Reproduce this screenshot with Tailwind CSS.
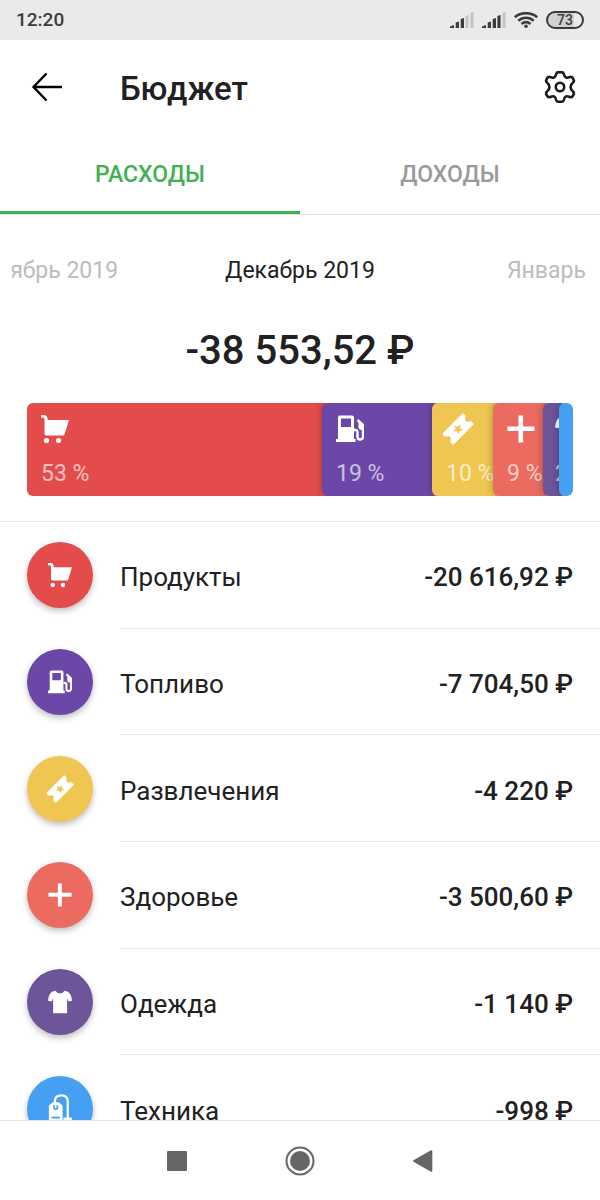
<!DOCTYPE html>
<html lang="ru">
<head>
  <meta charset="UTF-8" />
  <meta name="viewport" content="width=device-width, initial-scale=1.0" />
  <title>Бюджет</title>
  <script src="https://cdn.jsdelivr.net/npm/@tailwindcss/browser@4"></script>
</head>
<body class="h-screen flex flex-col overflow-hidden bg-white text-[#212121] font-['Roboto','Noto_Sans',sans-serif]">

  <!-- Category icons -->
  <svg class="hidden" aria-hidden="true">
    <symbol id="cart" viewBox="0 0 28 28">
      <path d="M0 0h3.500Q6.500.3 6.700 5H28l-4.300 14q-.4 1.500-2 1.500H5.500q-2 0-2-2V4q0-1-1-1.200L0 2.500Z" />
      <circle cx="5.500" cy="25.500" r="2.600" />
      <circle cx="17.500" cy="25.500" r="2.600" />
    </symbol>
    <symbol id="fuel" viewBox="0 0 28 28">
      <path fill-rule="evenodd" d="M4 .5h12q2 0 2 2V24h1.500v3H0v-3h2V2.500q0-2 2-2ZM5 3.500v8.500h10V3.500Z" />
      <path d="M18 15h1.500q2 0 2 2.500v4q0 3 2.500 3t3-2.500V11q0-1-.6-1.600L21.500 5" fill="none" stroke="currentColor" stroke-width="2.400" />
      <path d="M22.500 6.500 28 11v4h-2.500q-3-.5-3-3Z" />
    </symbol>
    <symbol id="ticket" viewBox="-2 -2 32 32">
      <path transform="rotate(-45 14 14)" fill-rule="evenodd" d="M0 6.200h28q.7 0 .7.700v3.600l-1.300.2-.5 1.200-1.500.3v3.600l1.500.3.500 1.200 1.300.2v3.600q0 .7-.7.700H0q-.7 0-.7-.7v-3.600l1.300-.2.500-1.200 1.500-.3v-3.600l-1.500-.3-.5-1.200-1.300-.2V6.900q0-.7.700-.7ZM14 8.600l-1.300 3.700-3.900.1 3.100 2.400-1.100 3.700 3.200-2.200 3.200 2.200-1.100-3.700 3.100-2.400-3.900-.1Z" />
    </symbol>
    <symbol id="plus" viewBox="0 0 28 28">
      <path d="M11.500.5h4.600v11h11.400v4.600H16.100v11.400h-4.600V16.100H.5v-4.600h11Z" />
    </symbol>
    <symbol id="shirt" viewBox="0 0 28 28">
      <path d="M8.500 1Q10.500 4 14 4t5.500-3Q24 1.500 25.700 4.500q2 3.500 2.300 8l-4 .8-1.700-3.500V27H6V9.800l-1.700 3.500-4.300-.8q.3-4.500 2.300-8Q4 1.500 8.500 1Z" />
    </symbol>
    <symbol id="tag" viewBox="0 0 28 36">
      <path fill-rule="evenodd" d="M5.500 10h7L17 14v20H1V14ZM6 13.500v2.500q0 3.200 3 3.200t3-3.200v-2.500h-2V16q0 1.200-1 1.200T8 16v-2.500ZM4 27v2h10v-2Z" />
      <path d="M8 13V9q0-7 7.500-7T23 9v21" fill="none" stroke="currentColor" stroke-width="2.600" />
      <path d="M18 28h10v4H18Z" />
    </symbol>
  </svg>

  <!-- Status bar -->
  <div class="flex h-10 shrink-0 items-center justify-between bg-[#eaeaea] px-4 text-[#3c3c3c]">
    <span class="text-[19px] font-medium">12:20</span>
    <div class="flex items-center gap-2">
      <svg class="h-4 w-6" viewBox="0 0 24 16" fill="currentColor">
        <path d="M0 16v-1.500L4 13v3Zm5.700 0v-5.500l3.300-1V16Zm5 0V7L14 6v10Z" />
        <path d="M15.500 16V4l3-1v13Zm5 0V1l3-1v16Z" fill="#c4c4c4" />
      </svg>
      <svg class="h-4 w-6" viewBox="0 0 24 16" fill="currentColor">
        <path d="M0 16v-1.500L4 13v3Zm5.700 0v-5.500l3.300-1V16Zm5 0V7L14 6v10Zm4.700 0V4l3.200-1v13Z" />
        <path d="M20.500 16V1l3-1v16Z" fill="#c4c4c4" />
      </svg>
      <svg class="h-4 w-6" viewBox="0 0 24 16" fill="none" stroke="currentColor" stroke-width="2.600">
        <path d="M.8 5.200Q5.500 1.200 12 1.200t11.200 4M4.300 8.800Q7.500 5.800 12 5.800t7.700 3M7.500 12q4.500-3.600 9 0" />
        <circle cx="12" cy="14.200" r="1.800" fill="currentColor" stroke="none" />
      </svg>
      <span class="flex h-[18px] w-[38px] items-center justify-center rounded-full border-2 border-current bg-linear-to-r from-[#d0d0d0] from-75% to-[#eaeaea] to-75% text-[14px] leading-none font-medium">73</span>
    </div>
  </div>

  <!-- App bar -->
  <header class="flex h-[94px] shrink-0 items-center px-6">
    <button type="button" aria-label="Назад" class="w-24 pl-[7px]">
      <svg class="h-8 w-8" viewBox="0 0 32 32" fill="none" stroke="#000" stroke-width="2.400">
        <path d="M31 16H2.500M15.500 2.500 2.500 16l13 13.500" />
      </svg>
    </button>
    <h1 class="grow pt-1 text-[33px] font-medium">Бюджет</h1>
    <button type="button" aria-label="Настройки">
      <svg class="h-8 w-8" viewBox="0 0 32 32" fill="none" stroke="#1a1a1a" stroke-width="2.600" stroke-linejoin="round">
        <path d="M14.500 1.200h3q1.800 0 2.300 1.800.7 3 2.200 3.600 1.500.5 3.300-.4 2.200-1 3.300.6l1 1.900q.9 1.600-.8 3-2.200 1.600-2.200 4.300t2.200 4.300q1.700 1.400.8 3l-1 1.900q-1.100 1.600-3.300.6-1.800-.9-3.300-.4-1.500.6-2.200 3.600-.5 1.800-2.300 1.800h-3q-1.800 0-2.300-1.800-.7-3-2.200-3.600-1.500-.5-3.300.4-2.200 1-3.300-.6l-1-1.900q-.9-1.600.8-3 2.200-1.600 2.200-4.300t-2.200-4.300q-1.700-1.400-.8-3l1-1.900q1.100-1.600 3.300-.6 1.800.9 3.300.4 1.500-.6 2.200-3.600.5-1.800 2.300-1.800Z" />
        <circle cx="16" cy="16" r="4.200" />
      </svg>
    </button>
  </header>

  <!-- Tabs -->
  <nav class="grid h-[81px] shrink-0 grid-cols-2 border-b border-[#e2e2e2] text-[23px] font-medium">
    <a href="#expenses" class="flex items-center justify-center border-b-3 border-[#43b153] pt-1.5 text-[#43b153]">РАСХОДЫ</a>
    <a href="#income" class="flex items-center justify-center border-b-3 border-transparent pt-1.5 text-[#9a9a9a]">ДОХОДЫ</a>
  </nav>

  <!-- Month switcher and total -->
  <section class="shrink-0 border-b border-[#e6e6e6] pb-[25px]">
    <div class="mx-3 grid grid-cols-[1fr_auto_1fr] pt-10 text-[23px] leading-8 whitespace-nowrap">
      <button type="button" class="flex justify-end overflow-hidden pr-[107px] text-[#bcbcbc]"><span>Ноябрь 2019</span></button>
      <span>Декабрь 2019</span>
      <button type="button" class="flex overflow-hidden pl-[132px] text-[#bcbcbc]"><span class="overflow-hidden">Январь 2019</span></button>
    </div>
    <p class="pt-10 text-center text-[40px] leading-12 font-medium">-38 553,52 ₽</p>

    <!-- Share of each category -->
    <div class="mx-[27px] mt-7 grid h-[93px] grid-cols-[295fr_110fr_61fr_50fr_16fr_14fr] overflow-hidden rounded-md text-[23px] whitespace-nowrap text-white">
      <div class="-mr-2 flex min-w-0 flex-col justify-between overflow-hidden bg-[#e44c4b] pt-3 pb-2 pl-3.5">
        <svg class="h-7 w-7 shrink-0 fill-current"><use href="#cart" /></svg>
        <span class="leading-7 text-white/65">53 %</span>
      </div>
      <div class="-mr-2 flex min-w-0 flex-col justify-between overflow-hidden rounded-md bg-[#6b48a8] pt-3 pb-2 pl-3.5 shadow-[0_0_8px_rgba(0,0,0,0.3)]">
        <svg class="h-7 w-7 shrink-0 fill-current"><use href="#fuel" /></svg>
        <span class="leading-7 text-white/65">19 %</span>
      </div>
      <div class="-mr-2 flex min-w-0 flex-col justify-between overflow-hidden rounded-md bg-[#efc651] pt-3 pb-2 pl-3.5 shadow-[0_0_8px_rgba(0,0,0,0.3)]">
        <svg class="-mt-0.5 -ml-1 size-8 shrink-0 fill-current"><use href="#ticket" /></svg>
        <span class="leading-7 text-white/65">10 %</span>
      </div>
      <div class="-mr-2 flex min-w-0 flex-col justify-between overflow-hidden rounded-md bg-[#ec6b60] pt-3 pb-2 pl-3.5 shadow-[0_0_8px_rgba(0,0,0,0.3)]">
        <svg class="h-7 w-7 shrink-0 fill-current"><use href="#plus" /></svg>
        <span class="leading-7 text-white/65">9 %</span>
      </div>
      <div class="-mr-2 flex min-w-0 flex-col justify-between overflow-hidden rounded-md bg-[#6e5499] pt-3 pb-2 pl-3 shadow-[0_0_8px_rgba(0,0,0,0.3)]">
        <svg class="h-7 w-7 shrink-0 fill-current"><use href="#shirt" /></svg>
        <span class="leading-7 text-white/65">2 %</span>
      </div>
      <div class="rounded-md bg-[#45a0f3] shadow-[0_0_8px_rgba(0,0,0,0.3)]"></div>
    </div>
  </section>

  <!-- Categories -->
  <main class="min-h-0 grow overflow-hidden">
    <ul class="grid h-[640px] grid-rows-6 text-[26px]">
      <li class="flex items-center pl-[27px]">
        <span class="mr-[27px] flex size-[66px] shrink-0 items-center justify-center rounded-full bg-[#e44c4b] text-white shadow-[0_3px_6px_rgba(0,0,0,0.25)]">
          <svg class="size-6 fill-current"><use href="#cart" /></svg>
        </span>
        <div class="flex h-full grow items-center justify-between border-b border-[#e6e6e6] pr-[27px] pt-1.5">
          <span>Продукты</span><span class="font-medium">-20 616,92 ₽</span>
        </div>
      </li>
      <li class="flex items-center pl-[27px]">
        <span class="mr-[27px] flex size-[66px] shrink-0 items-center justify-center rounded-full bg-[#6b48a8] text-white shadow-[0_3px_6px_rgba(0,0,0,0.25)]">
          <svg class="size-6 fill-current"><use href="#fuel" /></svg>
        </span>
        <div class="flex h-full grow items-center justify-between border-b border-[#e6e6e6] pr-[27px] pt-1.5">
          <span>Топливо</span><span class="font-medium">-7 704,50 ₽</span>
        </div>
      </li>
      <li class="flex items-center pl-[27px]">
        <span class="mr-[27px] flex size-[66px] shrink-0 items-center justify-center rounded-full bg-[#efc651] text-white shadow-[0_3px_6px_rgba(0,0,0,0.25)]">
          <svg class="size-7 fill-current"><use href="#ticket" /></svg>
        </span>
        <div class="flex h-full grow items-center justify-between border-b border-[#e6e6e6] pr-[27px] pt-1.5">
          <span>Развлечения</span><span class="font-medium">-4 220 ₽</span>
        </div>
      </li>
      <li class="flex items-center pl-[27px]">
        <span class="mr-[27px] flex size-[66px] shrink-0 items-center justify-center rounded-full bg-[#ec6b60] text-white shadow-[0_3px_6px_rgba(0,0,0,0.25)]">
          <svg class="size-6 fill-current"><use href="#plus" /></svg>
        </span>
        <div class="flex h-full grow items-center justify-between border-b border-[#e6e6e6] pr-[27px] pt-1.5">
          <span>Здоровье</span><span class="font-medium">-3 500,60 ₽</span>
        </div>
      </li>
      <li class="flex items-center pl-[27px]">
        <span class="mr-[27px] flex size-[66px] shrink-0 items-center justify-center rounded-full bg-[#6e5499] text-white shadow-[0_3px_6px_rgba(0,0,0,0.25)]">
          <svg class="size-6 fill-current"><use href="#shirt" /></svg>
        </span>
        <div class="flex h-full grow items-center justify-between border-b border-[#e6e6e6] pr-[27px] pt-1.5">
          <span>Одежда</span><span class="font-medium">-1 140 ₽</span>
        </div>
      </li>
      <li class="flex items-center pl-[27px]">
        <span class="mr-[27px] flex size-[66px] shrink-0 items-center justify-center rounded-full bg-[#45a0f3] text-white shadow-[0_3px_6px_rgba(0,0,0,0.25)]">
          <svg class="h-8 w-6 fill-current"><use href="#tag" /></svg>
        </span>
        <div class="flex h-full grow items-center justify-between pr-[27px] pt-1.5">
          <span>Техника</span><span class="font-medium">-998 ₽</span>
        </div>
      </li>
    </ul>
  </main>

  <!-- System navigation -->
  <footer class="flex h-20 shrink-0 items-center justify-center border-t border-[#e2e2e2] bg-white text-[#666]">
    <button type="button" aria-label="Недавние" class="flex w-[123px] justify-center">
      <svg class="size-5 fill-current" viewBox="0 0 20 20"><rect width="20" height="20" rx="1" /></svg>
    </button>
    <button type="button" aria-label="Домой" class="flex w-[123px] justify-center">
      <svg class="size-[30px] fill-current" viewBox="0 0 30 30">
        <circle cx="15" cy="15" r="13.500" fill="none" stroke="currentColor" stroke-width="2" />
        <circle cx="15" cy="15" r="10" />
      </svg>
    </button>
    <button type="button" aria-label="Назад" class="flex w-[123px] justify-center">
      <svg class="h-[22px] w-5 fill-current" viewBox="0 0 20 22"><path d="M.5 10.200 18 .3q1.300-.5 1.300 1v19.400q0 1.500-1.300 1L.5 11.800q-1-.8 0-1.600Z" /></svg>
    </button>
  </footer>
</body>
</html>
